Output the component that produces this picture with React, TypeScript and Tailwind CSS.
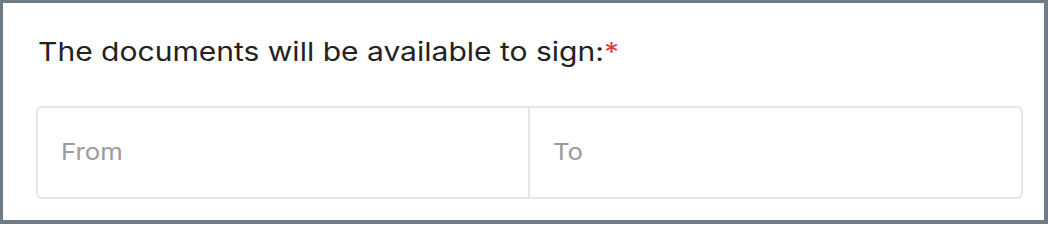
import React from "react";

export default function App() {
  return (
    <div className="w-[1048px] h-[224px] bg-[#6f7b87] pl-[3px] pt-[3px] pr-[4px] pb-[4px] flex">
      <div className="flex-1 bg-white pl-[33px] pr-[21px] pt-[33px] pb-[21px] flex flex-col" style={{ fontFamily: "Inter, 'Noto Sans', sans-serif" }}>
        <div className="text-[26px] leading-[32px] text-[#222222] pl-[2px]">
          <span className="inline-block origin-left scale-x-[1.155] whitespace-nowrap">
            The documents will be available to sign:<span className="text-[#e23b3b]">*</span>
          </span>
        </div>
        <div className="mt-auto h-[93px] grid grid-cols-2 border-2 border-[#e6e6e6] rounded-[6px]">
          <div className="flex items-center pl-[23px] text-[23px] text-[#9b9b9b] border-r-2 border-[#e6e6e6]">
            <span className="inline-block origin-left scale-x-[1.12]">From</span>
          </div>
          <div className="flex items-center pl-[23px] text-[23px] text-[#9b9b9b]">
            <span className="inline-block origin-left scale-x-[1.12]">To</span>
          </div>
        </div>
      </div>
    </div>
  );
}
